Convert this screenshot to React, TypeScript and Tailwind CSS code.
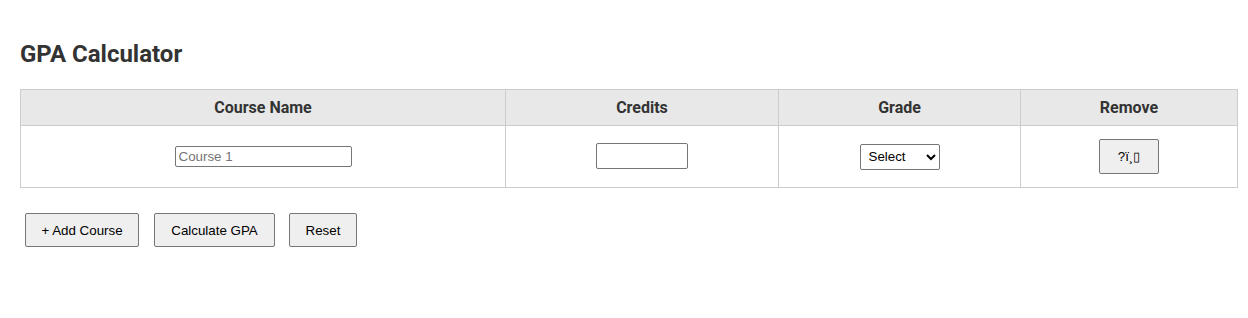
import React from "react";

export default function App() {
  const ctl = "font-['Liberation_Sans',Arial,sans-serif] text-[13.33px] text-black";
  const btn =
    "h-[34px] pt-[1px] whitespace-nowrap bg-[#efefef] border border-[#767676] rounded-[2px] " + ctl;
  return (
    <div className="p-[20px] font-['Roboto',sans-serif] text-[#333] bg-white">
      <h2 className="mt-[20px] mb-[21px] text-[24px] leading-[28px] font-bold text-[#333]">
        GPA Calculator
      </h2>
      <table className="w-[1218px] border-collapse border border-[#ccc] table-fixed">
        <thead>
          <tr className="bg-[#e8e8e8]">
            <th className="w-[485px] h-[36px] border border-[#ccc] text-[16px] font-bold text-center">
              Course Name
            </th>
            <th className="w-[273px] h-[36px] border border-[#ccc] text-[16px] font-bold text-center">
              Credits
            </th>
            <th className="w-[242px] h-[36px] border border-[#ccc] text-[16px] font-bold text-center">
              Grade
            </th>
            <th className="h-[36px] border border-[#ccc] text-[16px] font-bold text-center">
              Remove
            </th>
          </tr>
        </thead>
        <tbody>
          <tr>
            <td className="h-[62px] border border-[#ccc] text-center">
              <input
                type="text"
                placeholder="Course 1"
                className={
                  "w-[177px] h-[21px] px-[3px] -mt-[2px] border border-[#767676] rounded-[2px] placeholder:text-[#757575] align-middle " +
                  ctl
                }
              />
            </td>
            <td className="h-[62px] border border-[#ccc] text-center">
              <input
                type="text"
                className={
                  "w-[92px] h-[26px] px-[4px] -mt-[2px] border border-[#767676] rounded-[2px] align-middle " + ctl
                }
              />
            </td>
            <td className="h-[62px] border border-[#ccc] text-center">
              <select
                className={
                  "w-[80px] h-[26px] pl-[4px] border border-[#767676] rounded-[2px] bg-white align-middle " +
                  ctl
                }
                defaultValue=""
              >
                <option value="">Select</option>
                <option value="A">A</option>
                <option value="B">B</option>
                <option value="C">C</option>
                <option value="D">D</option>
                <option value="F">F</option>
              </select>
            </td>
            <td className="h-[62px] border border-[#ccc] text-center">
              <button
                className={
                  "w-[60px] h-[35px] bg-[#efefef] border border-[#767676] rounded-[2px] align-middle " + ctl
                }
              >
                ?ï¸▯
              </button>
            </td>
          </tr>
        </tbody>
      </table>
      <div className="flex mt-[25px] ml-[5px]">
        <button className={btn + " w-[114px]"}>+ Add Course</button>
        <button className={btn + " w-[121px] ml-[15px]"}>Calculate GPA</button>
        <button className={btn + " w-[68px] ml-[14px]"}>Reset</button>
      </div>
    </div>
  );
}
